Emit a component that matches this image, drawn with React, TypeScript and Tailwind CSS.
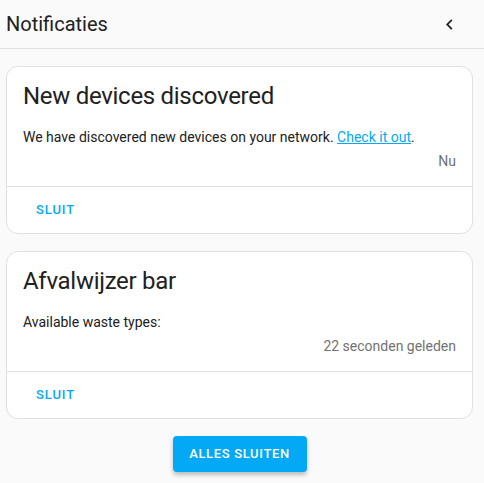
const font = { fontFamily: "Roboto, 'Noto Sans', sans-serif" };

type Note = {
  title: string;
  message: React.ReactNode;
  time: string;
};

const notes: Note[] = [
  {
    title: "New devices discovered",
    message: (
      <>
        We have discovered new devices on your network.{" "}
        <a href="#" className="text-[#03a9f4] underline">
          Check it out
        </a>
        .
      </>
    ),
    time: "Nu",
  },
  {
    title: "Afvalwijzer bar",
    message: <>Available waste types:</>,
    time: "22 seconden geleden",
  },
];

function NotificationCard({ note }: { note: Note }) {
  return (
    <div className="ml-[6px] w-[467px] h-[168px] bg-white border border-[#e0e0e0] rounded-[12px] flex flex-col">
      <div className="px-4 pb-[15px]">
        <div className="pt-[13px] text-[24px] leading-[32px] tracking-[-0.012em] text-[#212121]">
          {note.title}
        </div>
        <div className="mt-[15px] text-[14px] leading-[20px] text-[#212121]">
          {note.message}
        </div>
        <div className="mt-1 text-right text-[14px] leading-[20px] text-[#727272]">
          {note.time}
        </div>
      </div>
      <div className="border-t border-[#e0e0e0] flex-1 flex items-center pl-[29px]">
        <button className="text-[13px] font-medium tracking-[0.07em] text-[#03a9f4] uppercase">
          Sluit
        </button>
      </div>
    </div>
  );
}

export default function App() {
  return (
    <div className="w-[484px] h-[483px] bg-[#fafafa] overflow-hidden" style={font}>
      <header className="h-[49px] border-b border-[#e0e0e0] flex items-center justify-between pl-[6px] pr-[24px]">
        <h1 className="text-[20px] text-[#212121]">Notificaties</h1>
        <svg width="21" height="21" viewBox="0 0 24 24" className="text-[#212121]">
          <path
            fill="currentColor"
            d="M15.41,16.58L10.83,12L15.41,7.41L14,6L8,12L14,18L15.41,16.58Z"
          />
        </svg>
      </header>
      <main className="pt-[17px] flex flex-col gap-[17px]">
        {notes.map((n) => (
          <NotificationCard key={n.title} note={n} />
        ))}
        <div className="ml-[6px] w-[467px] flex justify-center">
          <button className="w-[134px] h-[36px] bg-[#03a9f4] text-white rounded-[4px] text-[13px] font-medium tracking-[0.05em] shadow-[0_3px_4px_rgba(0,0,0,0.25)]">
            ALLES SLUITEN
          </button>
        </div>
      </main>
    </div>
  );
}
